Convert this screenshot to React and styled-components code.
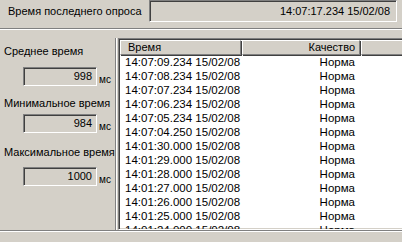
import React from "react";
import styled, { createGlobalStyle } from "styled-components";

const rows = [
  "14:07:09.234 15/02/08",
  "14:07:08.234 15/02/08",
  "14:07:07.234 15/02/08",
  "14:07:06.234 15/02/08",
  "14:07:05.234 15/02/08",
  "14:07:04.250 15/02/08",
  "14:01:30.000 15/02/08",
  "14:01:29.000 15/02/08",
  "14:01:28.000 15/02/08",
  "14:01:27.000 15/02/08",
  "14:01:26.000 15/02/08",
  "14:01:25.000 15/02/08",
  "14:01:24.000 15/02/08",
];

const stats = [
  { label: "Среднее время", value: "998", top: 7, gap: 9 },
  { label: "Минимальное время", value: "984", top: 11, gap: 4 },
  { label: "Максимальное время", value: "1000", top: 13, gap: 8 },
];

const App = () => {
  return (
    <Window>
      <GlobalStyle />
      <TopBar>
        <TopLabel>Время последнего опроса</TopLabel>
        <LastPoll>14:07:17.234 15/02/08</LastPoll>
      </TopBar>
      <Etched />
      <Main>
        <StatsPanel>
          {stats.map((s) => (
            <Stat key={s.label} $top={s.top}>
              <StatLabel>{s.label}</StatLabel>
              <StatRow $gap={s.gap}>
                <StatBox>{s.value}</StatBox>
                <Unit>мс</Unit>
              </StatRow>
            </Stat>
          ))}
        </StatsPanel>
        <ListView>
          <Header>
            <HeadCell $w={121}>Время</HeadCell>
            <HeadCell $w={118} $right>
              Качество
            </HeadCell>
            <HeadCell $fill />
          </Header>
          <Body>
            {rows.map((r) => (
              <Row key={r}>
                <Cell $w={121}>{r}</Cell>
                <Cell $w={118} $right>
                  Норма
                </Cell>
              </Row>
            ))}
          </Body>
        </ListView>
      </Main>
      <Etched />
    </Window>
  );
};

export default App;

const GlobalStyle = createGlobalStyle`
  html, body {
    margin: 0;
    padding: 0;
    background: #d4d0c8;
  }
`;

const Window = styled.div`
  width: 402px;
  height: 242px;
  overflow: hidden;
  background: #d4d0c8;
  font-family: "Liberation Sans", Arial, sans-serif;
  font-size: 11px;
  color: #000;
  display: flex;
  flex-direction: column;
`;

const TopBar = styled.div`
  height: 28px;
  display: flex;
  align-items: flex-start;
  flex-shrink: 0;
`;

const TopLabel = styled.div`
  padding-left: 8px;
  line-height: 22px;
  width: 141px;
`;

const sunken = `
  border-style: solid;
  border-width: 1px;
  border-color: #808080 #ffffff #ffffff #808080;
  box-shadow: inset 1px 1px 0 #404040, inset -1px -1px 0 #d4d0c8;
  box-sizing: border-box;
`;

const LastPoll = styled.div`
  ${sunken}
  width: 248px;
  height: 22px;
  text-align: right;
  line-height: 20px;
  padding-right: 6px;
`;

const Etched = styled.div`
  height: 0;
  border-top: 1px solid #808080;
  border-bottom: 1px solid #ffffff;
  flex-shrink: 0;
`;

const Main = styled.div`
  display: flex;
  height: 200px;
  flex-shrink: 0;
  padding-top: 8px;
  box-sizing: border-box;
  overflow: hidden;
`;

const StatsPanel = styled.div`
  width: 116px;
  border-right: 1px solid #808080;
  box-shadow: 1px 0 0 #ffffff;
  margin-right: 2px;
  padding-left: 4px;
  box-sizing: border-box;
  display: flex;
  flex-direction: column;
`;

const Stat = styled.div`
  margin-top: ${(p) => p.$top}px;
`;

const StatLabel = styled.div`
  line-height: 13px;
  white-space: nowrap;
`;

const StatRow = styled.div`
  display: flex;
  align-items: flex-end;
  margin-top: ${(p) => p.$gap}px;
  padding-left: 19px;
`;

const StatBox = styled.div`
  ${sunken}
  width: 74px;
  height: 19px;
  line-height: 17px;
  text-align: right;
  padding-right: 4px;
`;

const Unit = styled.span`
  font-size: 10px;
  margin-left: 2px;
  line-height: 13px;
`;

const ListView = styled.div`
  ${sunken}
  flex: 1;
  min-height: 0;
  margin-right: -4px;
  background: #ffffff;
  display: flex;
  flex-direction: column;
  overflow: hidden;
  padding: 1px 0 0 1px;
`;

const Header = styled.div`
  display: flex;
  height: 15px;
  flex-shrink: 0;
`;

const HeadCell = styled.div`
  box-sizing: border-box;
  width: ${(p) => (p.$fill ? "auto" : `${p.$w}px`)};
  flex: ${(p) => (p.$fill ? 1 : "none")};
  background: #d4d0c8;
  border-top: 1px solid #ffffff;
  border-left: 1px solid #ffffff;
  border-right: 1px solid #808080;
  border-bottom: 1px solid #808080;
  box-shadow: 1px 1px 0 #404040;
  line-height: 13px;
  padding: 0 ${(p) => (p.$right ? "4px" : "0")} 0 ${(p) => (p.$right ? "0" : "7px")};
  text-align: ${(p) => (p.$right ? "right" : "left")};
  margin-right: 1px;
`;

const Body = styled.div`
  flex: 1;
  min-height: 0;
  overflow: hidden;
`;

const Row = styled.div`
  display: flex;
  height: 14px;
  line-height: 14px;
`;

const Cell = styled.div`
  width: ${(p) => p.$w}px;
  margin-right: 1px;
  box-sizing: border-box;
  padding: ${(p) => (p.$right ? "0 5px 0 0" : "0 0 0 5px")};
  text-align: ${(p) => (p.$right ? "right" : "left")};
  white-space: nowrap;
  font-size: 11.5px;
`;
